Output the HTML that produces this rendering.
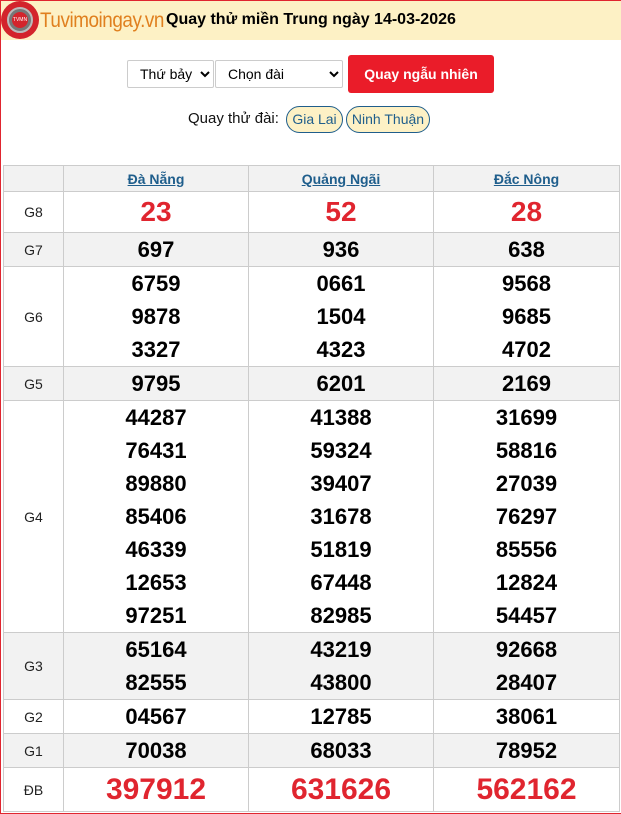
<!DOCTYPE html>
<html><head><meta charset="utf-8"><style>
*{margin:0;padding:0;box-sizing:border-box}
body{width:621px;height:814px;overflow:hidden;background:#fff;font-family:"Liberation Sans",Arial,sans-serif;position:relative}
.frame{position:absolute;left:0;top:0;width:621px;height:814px;border:1px solid #e0252f;border-right:none}
.top{position:absolute;left:1px;top:1px;width:620px;height:39px;background:#fdf1c5}
.logo{position:absolute;left:1px;top:1px;width:38px;height:38px;border-radius:50%;background:#d3242c}
.logo .r{position:absolute;left:6px;top:6px;width:26px;height:26px;border-radius:50%;background:#777;border:2px solid #bbb}
.logo .c{position:absolute;left:11px;top:11px;width:16px;height:16px;border-radius:50%;background:#d3242c;color:#fff;font-size:5px;line-height:16px;text-align:center}
.brand{position:absolute;left:40px;top:9px;font-size:21px;color:#e0801f;letter-spacing:-0.5px;transform:scaleX(.9);transform-origin:left}
.title{position:absolute;left:166px;top:11px;font-size:16px;font-weight:bold;color:#000}
select{position:absolute;top:60px;height:28px;border:1px solid #ccc;border-radius:2px;background:#fff;font-family:"Liberation Sans",sans-serif;font-size:14px;padding-left:8px;color:#000}
.btn{position:absolute;left:348px;top:55px;width:146px;height:38px;background:#ea1c29;border-radius:3px;color:#fff;font-weight:bold;font-size:14px;text-align:center;line-height:38px}
.lbl{position:absolute;left:188px;top:110px;font-size:15px;color:#111}
.pill{position:absolute;top:106px;height:27px;border:1px solid #1f5e8c;border-radius:14px;background:#fdf1c5;color:#1f5e8c;font-size:14px;line-height:25px;text-align:center}
table{position:absolute;left:3px;top:165px;width:616px;border-collapse:collapse;table-layout:fixed}
td,th{border:1px solid #ccc;text-align:center;vertical-align:middle}
th{height:26px;font-size:14px;font-weight:bold;color:#1f5e8c;text-decoration:underline;background:#f2f2f2}
.g td{background:#f2f2f2}
td.l{font-size:14px;color:#222}
td.n{font-size:22px;font-weight:bold;color:#000;line-height:33px}
td.r{color:#e0252f;font-size:28px;font-weight:bold}
td.db{color:#e0252f;font-size:30px;font-weight:bold}
</style></head><body>
<div class="top"></div>
<div class="frame"></div>
<div class="logo"><div class="r"></div><div class="c">TVMN</div></div>
<div class="brand">Tuvimoingay.vn</div>
<div class="title">Quay thử miền Trung ngày 14-03-2026</div>
<select style="left:127px;width:87px"><option>Thứ bảy</option></select>
<select style="left:215px;width:128px"><option>Chọn đài</option></select>
<div class="btn">Quay ngẫu nhiên</div>
<div class="lbl">Quay thử đài:</div>
<div class="pill" style="left:286px;width:57px">Gia Lai</div>
<div class="pill" style="left:346px;width:84px">Ninh Thuận</div>
<table>
<colgroup><col style="width:60px"><col style="width:185px"><col style="width:185px"><col style="width:186px"></colgroup>
<tr><th style="text-decoration:none"></th><th>Đà Nẵng</th><th>Quảng Ngãi</th><th>Đắc Nông</th></tr>
<tr style="height:41px"><td class="l">G8</td><td class="r">23</td><td class="r">52</td><td class="r">28</td></tr>
<tr class="g" style="height:34px"><td class="l">G7</td><td class="n">697</td><td class="n">936</td><td class="n">638</td></tr>
<tr style="height:100px"><td class="l">G6</td><td class="n">6759<br>9878<br>3327</td><td class="n">0661<br>1504<br>4323</td><td class="n">9568<br>9685<br>4702</td></tr>
<tr class="g" style="height:34px"><td class="l">G5</td><td class="n">9795</td><td class="n">6201</td><td class="n">2169</td></tr>
<tr style="height:232px"><td class="l">G4</td><td class="n">44287<br>76431<br>89880<br>85406<br>46339<br>12653<br>97251</td><td class="n">41388<br>59324<br>39407<br>31678<br>51819<br>67448<br>82985</td><td class="n">31699<br>58816<br>27039<br>76297<br>85556<br>12824<br>54457</td></tr>
<tr class="g" style="height:67px"><td class="l">G3</td><td class="n">65164<br>82555</td><td class="n">43219<br>43800</td><td class="n">92668<br>28407</td></tr>
<tr style="height:34px"><td class="l">G2</td><td class="n">04567</td><td class="n">12785</td><td class="n">38061</td></tr>
<tr class="g" style="height:34px"><td class="l">G1</td><td class="n">70038</td><td class="n">68033</td><td class="n">78952</td></tr>
<tr style="height:44px"><td class="l">ĐB</td><td class="db">397912</td><td class="db">631626</td><td class="db">562162</td></tr>
</table>
</body></html>
